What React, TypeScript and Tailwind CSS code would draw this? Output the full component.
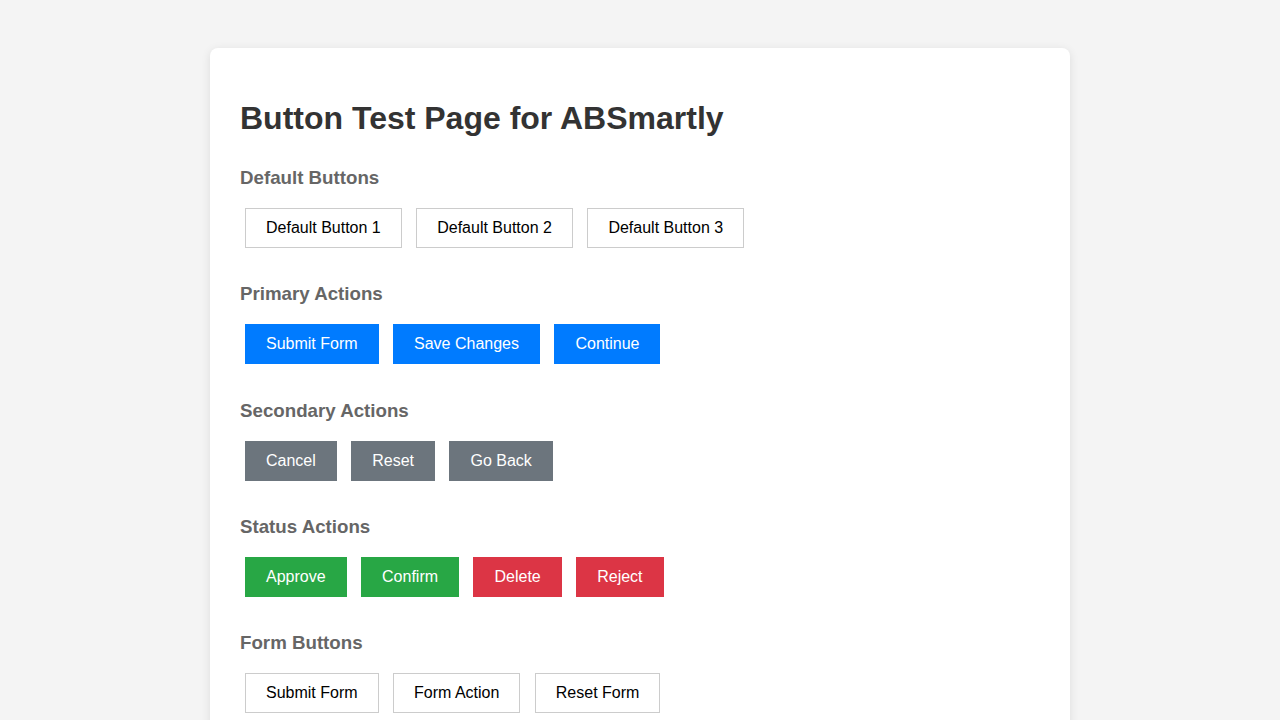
type Variant = 'default' | 'primary' | 'secondary' | 'success' | 'danger';

const variantClass: Record<Variant, string> = {
  default: 'bg-white border-[#ccc] text-black',
  primary: 'bg-[#007bff] border-[#007bff] text-white',
  secondary: 'bg-[#6c757d] border-[#6c757d] text-white',
  success: 'bg-[#28a745] border-[#28a745] text-white',
  danger: 'bg-[#dc3545] border-[#dc3545] text-white',
};

const sections: { title: string; buttons: { label: string; variant: Variant }[] }[] = [
  {
    title: 'Default Buttons',
    buttons: [
      { label: 'Default Button 1', variant: 'default' },
      { label: 'Default Button 2', variant: 'default' },
      { label: 'Default Button 3', variant: 'default' },
    ],
  },
  {
    title: 'Primary Actions',
    buttons: [
      { label: 'Submit Form', variant: 'primary' },
      { label: 'Save Changes', variant: 'primary' },
      { label: 'Continue', variant: 'primary' },
    ],
  },
  {
    title: 'Secondary Actions',
    buttons: [
      { label: 'Cancel', variant: 'secondary' },
      { label: 'Reset', variant: 'secondary' },
      { label: 'Go Back', variant: 'secondary' },
    ],
  },
  {
    title: 'Status Actions',
    buttons: [
      { label: 'Approve', variant: 'success' },
      { label: 'Confirm', variant: 'success' },
      { label: 'Delete', variant: 'danger' },
      { label: 'Reject', variant: 'danger' },
    ],
  },
  {
    title: 'Form Buttons',
    buttons: [
      { label: 'Submit Form', variant: 'default' },
      { label: 'Form Action', variant: 'default' },
      { label: 'Reset Form', variant: 'default' },
    ],
  },
];

export default function App() {
  return (
    <div className="min-h-screen bg-[#f4f4f4] pt-[48px] pb-10 font-['Liberation_Sans',Arial,sans-serif]">
      <div className="mx-auto w-[860px] bg-white rounded-lg shadow-[0_2px_10px_rgba(0,0,0,0.1)] p-[30px]">
        <h1 className="mt-[22px] mb-[30px] text-[32px] leading-[37px] font-bold text-[#333]">
          Button Test Page for ABSmartly
        </h1>

        {sections.map((s) => (
          <div key={s.title} className="mb-[30.3px]">
            <h3 className="text-[18.72px] leading-[21px] font-bold text-[#666]">{s.title}</h3>
            <div className="mt-[15px] py-[5px] pl-[5px] flex gap-[14.45px]">
              {s.buttons.map((b) => (
                <button
                  key={b.label}
                  className={`h-[40px] px-5 border text-base leading-[18px] cursor-pointer ${variantClass[b.variant]}`}
                >
                  {b.label}
                </button>
              ))}
            </div>
          </div>
        ))}
      </div>
    </div>
  );
}
